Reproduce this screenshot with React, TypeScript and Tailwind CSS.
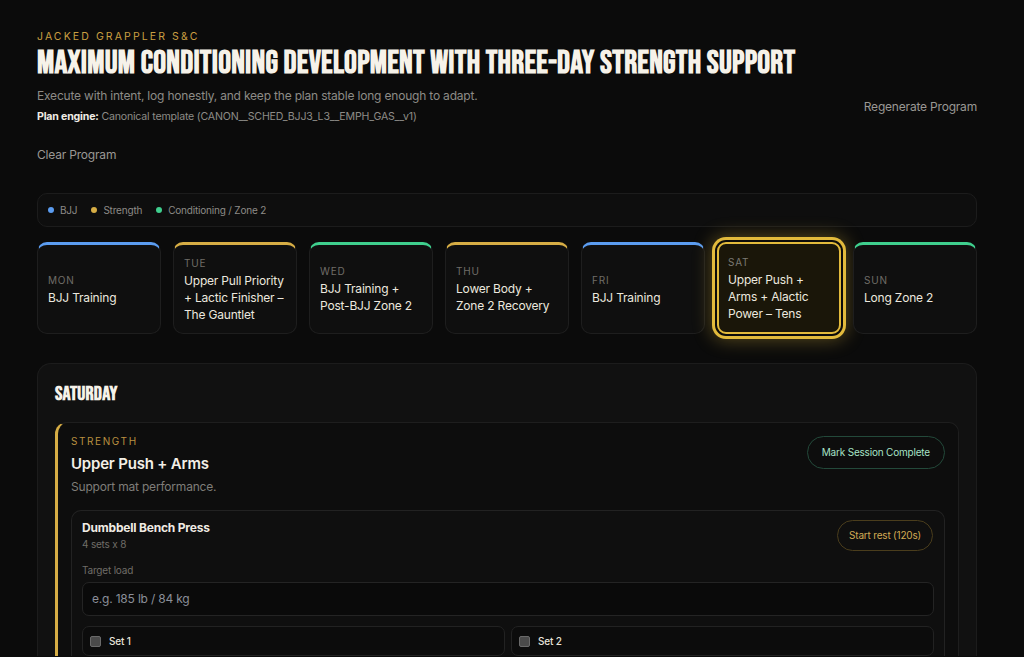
import React from "react";

const days = [
  { d: "MON", t: "BJJ Training", c: "border-t-[#5b9cf0]" },
  { d: "TUE", t: "Upper Pull Priority + Lactic Finisher – The Gauntlet", c: "border-t-[#d6ad45]" },
  { d: "WED", t: "BJJ Training + Post-BJJ Zone 2", c: "border-t-[#3fcf8e]" },
  { d: "THU", t: "Lower Body + Zone 2 Recovery", c: "border-t-[#d6ad45]" },
  { d: "FRI", t: "BJJ Training", c: "border-t-[#5b9cf0]" },
  { d: "SAT", t: "Upper Push + Arms + Alactic Power – Tens", c: "", active: true },
  { d: "SUN", t: "Long Zone 2", c: "border-t-[#3fcf8e]" },
];

const display = { fontFamily: '"Bebas Neue", "Liberation Sans Narrow", "DejaVu Sans Condensed", sans-serif' };
const body = { fontFamily: 'Inter, "Noto Sans", sans-serif' };

export default function App() {
  return (
    <div className="min-h-[657px] w-[1024px] bg-[#0b0b0b] text-[#ece8df] tracking-[-0.012em]" style={body}>
      <div className="pl-[37px] pr-[47px] pt-[30px]">
        <div className="flex items-start justify-between">
          <div>
            <div className="text-[10.5px] leading-[14px] tracking-[0.2em] text-[#c99f42]">JACKED GRAPPLER S&amp;C</div>
            <h1 className="mt-[2px] text-[32px] font-bold leading-[36px] tracking-[0.25px] text-[#f6f2e9] whitespace-nowrap" style={display}>
              MAXIMUM CONDITIONING DEVELOPMENT WITH THREE-DAY STRENGTH SUPPORT
            </h1>
            <p className="mt-[5px] text-[12px] leading-[18px] text-[#8d8b87]">
              Execute with intent, log honestly, and keep the plan stable long enough to adapt.
            </p>
            <p className="mt-[5px] text-[10.6px] leading-[14px] text-[#8d8b87]">
              <span className="font-bold text-[#f0ece4]">Plan engine:</span> Canonical template (CANON__SCHED_BJJ3_L3__EMPH_GAS__v1)
            </p>
          </div>
          <button className="mt-[69px] text-[12px] leading-[16px] text-[#9a9894]">Regenerate Program</button>
        </div>
        <button className="mt-[23px] block text-[12px] leading-[16px] text-[#9a9894]">Clear Program</button>

        <div className="mt-[30px] flex h-[34px] items-center gap-[14px] rounded-[10px] border border-[#1c1c1c] bg-[#0e0e0e] px-[10px] text-[10px] text-[#8d8b87]">
          <span className="flex items-center gap-[6px]"><span className="h-[6px] w-[6px] rounded-full bg-[#5b9cf0]" />BJJ</span>
          <span className="flex items-center gap-[6px]"><span className="h-[6px] w-[6px] rounded-full bg-[#d6ad45]" />Strength</span>
          <span className="flex items-center gap-[6px]"><span className="h-[6px] w-[6px] rounded-full bg-[#3fcf8e]" />Conditioning / Zone 2</span>
        </div>

        <div className="mt-[15px] grid grid-cols-7 gap-[12px]">
          {days.map((x) =>
            x.active ? (
              <div
                key={x.d}
                className="flex h-[92px] flex-col justify-center rounded-[9px] border-2 border-[#e2ba3c] bg-[#1a1609] px-[9px] ring-[3px] ring-[#e2ba3c] ring-offset-2 ring-offset-[#0b0b0b] shadow-[0_0_18px_6px_rgba(226,186,60,0.35)]"
              >
                <div className="text-[10px] leading-[14px] tracking-[0.08em] text-[#7c7a73]">{x.d}</div>
                <div className="mt-[2px] text-[12px] leading-[17px] text-[#ece8df]">{x.t}</div>
              </div>
            ) : (
              <div
                key={x.d}
                className={`flex h-[92px] flex-col justify-center rounded-[10px] border border-t-[3px] border-[#1e1e1e] bg-[#0f0f0f] px-[10px] ${x.c}`}
              >
                <div className="text-[10px] leading-[14px] tracking-[0.08em] text-[#6f6d68]">{x.d}</div>
                <div className="mt-[2px] text-[12px] leading-[17px] text-[#ece8df]">{x.t}</div>
              </div>
            )
          )}
        </div>

        <div className="mt-[29px] rounded-t-[14px] border border-b-0 border-[#1c1c1c] bg-[#111111] px-[17px] pt-[20px]">
          <h2 className="text-[20px] font-bold leading-[20px] tracking-[0.2px] text-[#f6f2e9]" style={display}>SATURDAY</h2>
          <div className="mt-[18px] rounded-tl-[12px] rounded-tr-[10px] border border-l-[3px] border-b-0 border-[#1e1e1e] border-l-[#d6ad45] bg-[#0d0d0d] pl-[13px] pr-[13px] pt-[11px]">
            <div className="flex items-start justify-between">
              <div>
                <div className="text-[10px] leading-[14px] tracking-[0.16em] text-[#b99040]">STRENGTH</div>
                <div className="mt-[6px] text-[15px] font-semibold leading-[20px] text-[#f3efe6]">Upper Push + Arms</div>
                <div className="mt-[5px] text-[12px] leading-[16px] text-[#7f7d79]">Support mat performance.</div>
              </div>
              <button className="mt-[2px] h-[33px] rounded-full border border-[#23493a] px-[14px] text-[10px] text-[#a7e3c7]">Mark Session Complete</button>
            </div>
            <div className="mt-[15px] rounded-t-[10px] border border-b-0 border-[#222222] bg-[#0f0f0f] px-[10px] pt-[9px]">
              <div className="flex items-start justify-between">
                <div>
                  <div className="text-[12px] font-bold leading-[16px] text-[#efebe3]">Dumbbell Bench Press</div>
                  <div className="mt-[1px] text-[10px] leading-[14px] text-[#6f6d68]">4 sets x 8</div>
                </div>
                <button className="mr-[1px] h-[31px] rounded-full border border-[#4a3d1c] px-[11px] text-[10px] text-[#d2ab54]">Start rest (120s)</button>
              </div>
              <div className="mt-[12px] text-[10px] leading-[14px] text-[#6f6d68]">Target load</div>
              <div className="mt-[5px] flex h-[34px] items-center rounded-[7px] border border-[#242424] bg-[#0a0a0a] px-[9px] text-[12px] text-[#8b8f99]">
                e.g. 185 lb / 84 kg
              </div>
              <div className="mt-[10px] grid grid-cols-2 gap-[6px]">
                {["Set 1", "Set 2"].map((s) => (
                  <div key={s} className="flex h-[30px] items-center gap-[8px] rounded-[7px] border border-[#222222] bg-[#0c0c0c] px-[7px]">
                    <span className="h-[11px] w-[11px] rounded-[2px] border border-[#6a6a6a] bg-[#4a4a4a]" />
                    <span className="text-[10px] font-medium text-[#e8e4da]">{s}</span>
                  </div>
                ))}
              </div>
            </div>
          </div>
        </div>
      </div>
    </div>
  );
}
